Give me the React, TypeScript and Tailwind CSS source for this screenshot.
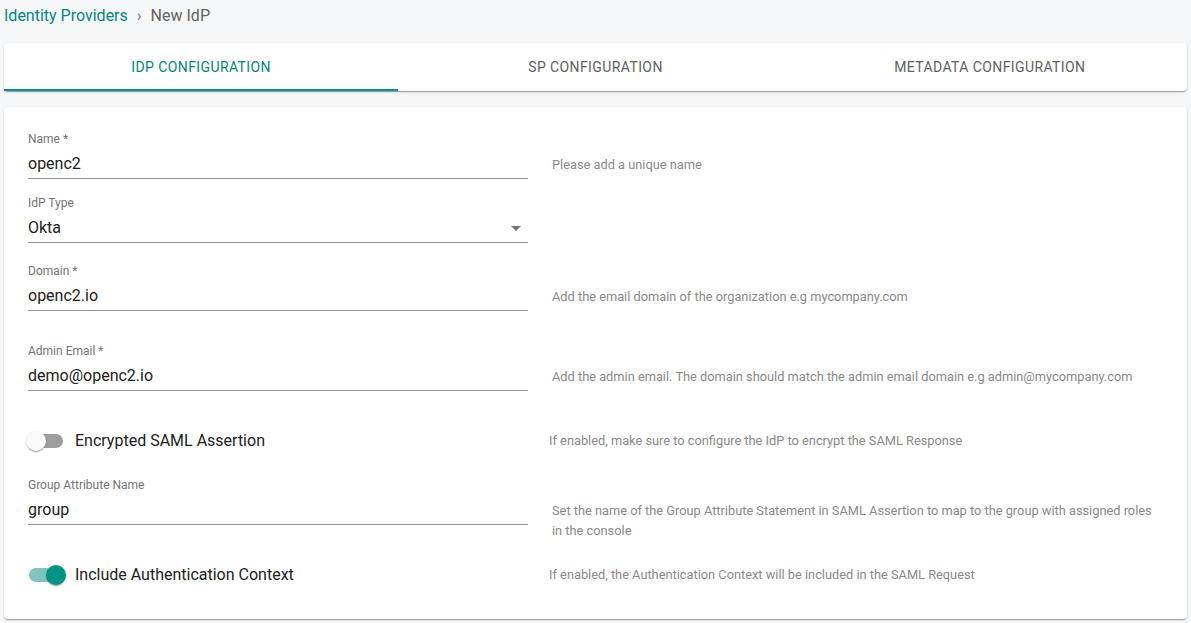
import React from 'react';

const teal = 'text-[#00897b]';

type FieldProps = {
  label: string;
  value: string;
  help?: string;
  select?: boolean;
  className?: string;
};

const TextField = ({ label, value, help, select, className }: FieldProps) => {
  return (
    <div className={`flex ${className ?? ''}`}>
      <div className="w-[500px] shrink-0">
        <div className="pt-[1px] text-[12px] leading-4 text-[#757575]">{label}</div>
        <div className="flex items-center justify-between border-b border-[#949494] pt-[5px] pb-[2px]">
          <span className="text-[16px] leading-6 text-[#212121]">{value}</span>
          {select && (
            <svg width="24" height="24" viewBox="0 0 24 24" className="mr-0">
              <path d="M7 10l5 5 5-5z" fill="#757575" />
            </svg>
          )}
        </div>
      </div>
      {help && (
        <div className="ml-6 pt-[25px] text-[12.8px] leading-5 text-[#8a8a8a]">{help}</div>
      )}
    </div>
  );
};

type ToggleProps = {
  label: string;
  help: string;
  checked: boolean;
  className?: string;
};

const ToggleRow = ({ label, help, checked, className }: ToggleProps) => {
  return (
    <div className={`flex items-center h-[38px] ${className ?? ''}`}>
      <div className="w-[532px] shrink-0 flex items-center -ml-[11px]">
        <span className="relative w-[58px] h-[38px] flex items-center justify-center">
          <span
            className={`w-[34px] h-[14px] rounded-full ${
              checked ? 'bg-[#80c4bd]' : 'bg-[#9e9e9e]'
            }`}
          />
          <span
            className={`absolute top-[9px] w-5 h-5 rounded-full shadow-[0_2px_1px_-1px_rgba(0,0,0,0.2),0_1px_1px_0_rgba(0,0,0,0.14),0_1px_3px_0_rgba(0,0,0,0.12)] ${
              checked ? 'left-[29px] bg-[#009485]' : 'left-[9px] bg-[#fafafa]'
            }`}
          />
        </span>
        <span className="text-[16px] leading-6 text-[#212121]">{label}</span>
      </div>
      <div className="text-[12.8px] leading-5 text-[#8a8a8a]">{help}</div>
    </div>
  );
};

const App = () => {
  const cardShadow =
    'shadow-[0_2px_1px_-1px_rgba(0,0,0,0.2),0_1px_1px_0_rgba(0,0,0,0.14),0_1px_3px_0_rgba(0,0,0,0.12)]';

  return (
    <div className="min-h-[623px] bg-[#f6f7f9] px-1 font-['Roboto',sans-serif]">
      <div className="h-[30px] pt-[2px] flex items-center text-[16px]">
        <span className={teal}>Identity Providers</span>
        <span className="mx-[9px] text-[#757575]">›</span>
        <span className="text-[#616161]">New IdP</span>
      </div>

      <div className={`mt-[13px] h-12 bg-white rounded ${cardShadow} grid grid-cols-3`}>
        <div className="relative flex items-center justify-center">
          <span className={`text-[14px] tracking-[0.4px] ${teal}`}>IDP CONFIGURATION</span>
          <span className="absolute left-0 right-0 bottom-0 h-[2px] bg-[#009485]" />
        </div>
        <div className="flex items-center justify-center">
          <span className="text-[14px] tracking-[0.4px] text-[#616161]">SP CONFIGURATION</span>
        </div>
        <div className="flex items-center justify-center">
          <span className="text-[14px] tracking-[0.4px] text-[#616161]">METADATA CONFIGURATION</span>
        </div>
      </div>

      <div className={`mt-4 h-[512px] bg-white rounded ${cardShadow} px-6 pt-[23px]`}>
        <TextField label="Name *" value="openc2" help="Please add a unique name" />
        <TextField label="IdP Type" value="Okta" select className="mt-[15px]" />
        <TextField
          label="Domain *"
          value="openc2.io"
          help="Add the email domain of the organization e.g mycompany.com"
          className="mt-[19px]"
        />
        <TextField
          label="Admin Email *"
          value="demo@openc2.io"
          help="Add the admin email. The domain should match the admin email domain e.g admin@mycompany.com"
          className="mt-[31px]"
        />
        <ToggleRow
          label="Encrypted SAML Assertion"
          help="If enabled, make sure to configure the IdP to encrypt the SAML Response"
          checked={false}
          className="mt-[31px]"
        />
        <TextField
          label="Group Attribute Name"
          value="group"
          help="Set the name of the Group Attribute Statement in SAML Assertion to map to the group with assigned roles in the console"
          className="mt-4"
        />
        <ToggleRow
          label="Include Authentication Context"
          help="If enabled, the Authentication Context will be included in the SAML Request"
          checked
          className="mt-[15px]"
        />
      </div>
    </div>
  );
};

export default App;
